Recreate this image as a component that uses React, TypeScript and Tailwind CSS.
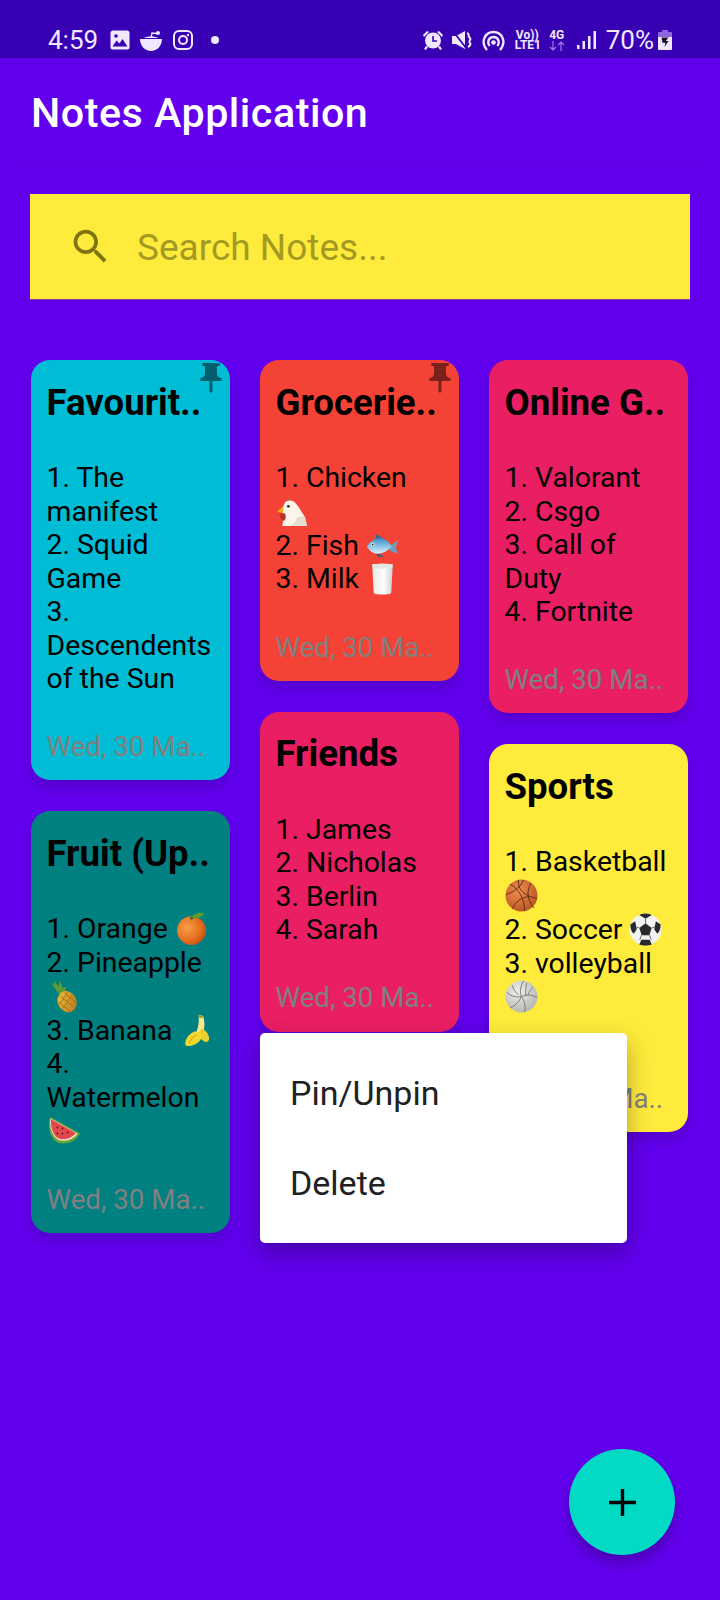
import React from 'react';

const Chicken = () => (
  <svg viewBox="0 0 32 32" className="inline-block w-[33px] h-[33px] align-[-7px]">
    <path d="M10 3l1 2 1-2 1 2 1.5-2 .5 3-5 .5z" fill="#c9603f" />
    <path d="M8 9c1-4 8-5 11-1 3 3 6 9 9 13l2 9H6c1-5 2-8 1-12-1-3-1-6 1-9z" fill="#fbf4ea" />
    <path d="M20 22c3-1 6-2 8-1l2 9H14c3-1 5-4 6-8z" fill="#e6dccd" />
    <path d="M7 11l-6 5 6 2z" fill="#f2a81d" />
    <path d="M3 18c1 3 2 7 4 7s3-3 2-7z" fill="#b5302a" />
    <circle cx="12" cy="11" r="1.4" fill="#333" />
  </svg>
);
const Fish = () => (
  <svg viewBox="0 0 32 32" className="inline-block w-[33px] h-[33px] align-[-7px]">
    <defs>
      <linearGradient id="fishg" x1="0" y1="0" x2="0" y2="1">
        <stop offset="0" stopColor="#3f8fc4" />
        <stop offset="0.55" stopColor="#8cc7e6" />
        <stop offset="1" stopColor="#dfeef5" />
      </linearGradient>
    </defs>
    <path d="M24 16l7-5-2 7 2 6-8-3z" fill="#6f9fc0" />
    <path d="M10 5c2 1 5 3 7 4l-8 2z" fill="#2d6f9f" />
    <path d="M1 17c3-6 11-10 17-7 3 1 5 4 7 7-3 4-9 7-14 7-4 0-8-3-10-7z" fill="url(#fishg)" />
    <circle cx="6.5" cy="15" r="1.8" fill="#fff" />
    <circle cx="6.5" cy="15" r="1" fill="#223" />
    <path d="M10 24l5 1 3 2-7 0z" fill="#33607f" />
  </svg>
);
const Milk = () => (
  <svg viewBox="0 0 32 32" className="inline-block w-[33px] h-[33px] align-[-7px]">
    <defs>
      <linearGradient id="milkg" x1="0" y1="0" x2="1" y2="0">
        <stop offset="0" stopColor="#e9e9e6" />
        <stop offset="0.55" stopColor="#ffffff" />
        <stop offset="1" stopColor="#c9d0d2" />
      </linearGradient>
    </defs>
    <path d="M6 2h20l-1.500 28c-1 2-16 2-17 0z" fill="url(#milkg)" />
    <ellipse cx="16" cy="4" rx="10" ry="2.6" fill="#e4e7e5" />
  </svg>
);
const Orange = () => (
  <svg viewBox="0 0 32 32" className="inline-block w-[33px] h-[33px] align-[-7px]">
    <defs>
      <radialGradient id="orangeg" cx="0.35" cy="0.4" r="0.75">
        <stop offset="0" stopColor="#f6a04a" />
        <stop offset="0.6" stopColor="#e56f1e" />
        <stop offset="1" stopColor="#b84b10" />
      </radialGradient>
    </defs>
    <circle cx="16" cy="18" r="14" fill="url(#orangeg)" />
    <path d="M16 5c2-3 7-5 12-4-1 4-7 6-12 5z" fill="#5d9a2f" />
    <circle cx="16" cy="6" r="1.4" fill="#3c6b1d" />
  </svg>
);
const Pineapple = () => (
  <svg viewBox="0 0 32 32" className="inline-block w-[33px] h-[33px] align-[-7px]">
    <defs>
      <linearGradient id="pineg" x1="0" y1="0" x2="1" y2="1">
        <stop offset="0" stopColor="#f3c63c" />
        <stop offset="1" stopColor="#b56f1a" />
      </linearGradient>
    </defs>
    <path d="M12 14L3 2l4 3 0-4 4 5 2-5 2 7 4-2-2 6 4 0z" fill="#5f9a35" />
    <ellipse cx="19.5" cy="21" rx="9" ry="10.5" transform="rotate(-28 19.5 21)" fill="url(#pineg)" />
    <path d="M13 16l13 10M11 21l11 9M17 12l11 10M25 14L14 29M20 12L11 25" stroke="#9b6a14" strokeWidth="0.8" fill="none" />
  </svg>
);
const Banana = () => (
  <svg viewBox="0 0 32 32" className="inline-block w-[33px] h-[33px] align-[-7px]">
    <path d="M19 1c3 0 5 1 5 3 1 5 1 10-1 14-2 3-5 4-8 3 3-5 5-12 4-20z" fill="#f7e58a" />
    <path d="M22 14c3 1 6 4 7 8 1 3-1 6-4 5-3-1-5-4-6-8z" fill="#e9cf2e" />
    <path d="M15 17c3 0 6 1 7 3 1 4-3 8-8 10-4 2-8 1-8-1 0-5 4-10 9-12z" fill="#f2d92d" />
    <path d="M17 20c-3 2-6 5-7 9" stroke="#c9ac18" strokeWidth="1" fill="none" />
    <path d="M19 1l4 1-.5 2-3.500-.5z" fill="#a9952a" />
  </svg>
);
const Watermelon = () => (
  <svg viewBox="0 0 32 32" className="inline-block w-[33px] h-[33px] align-[-7px]">
    <path d="M3 2L32 18C28 26 19 29 11 27 3 24 0 11 3 2z" fill="#6aa53a" />
    <path d="M3.500 3.500L29.500 18C25 24 18 26 12 24.500 5 22 2 11 3.500 3.500z" fill="#f6ecd6" />
    <path d="M4 4L28 17.500C24 23 17 24.500 12 23 6 21 3 11 4 4z" fill="#e2474f" />
    <circle cx="10" cy="12" r="0.9" fill="#5c1a1a" />
    <circle cx="15" cy="18" r="0.9" fill="#5c1a1a" />
    <circle cx="20" cy="17" r="0.9" fill="#5c1a1a" />
    <circle cx="10" cy="18" r="0.9" fill="#5c1a1a" />
    <circle cx="15" cy="13" r="0.9" fill="#5c1a1a" />
  </svg>
);
const Basketball = () => (
  <svg viewBox="0 0 32 32" className="inline-block w-[33px] h-[33px] align-[-7px]">
    <defs>
      <radialGradient id="bballg" cx="0.4" cy="0.35" r="0.75">
        <stop offset="0" stopColor="#ef8f50" />
        <stop offset="1" stopColor="#b4501d" />
      </radialGradient>
    </defs>
    <circle cx="16" cy="16" r="15.500" fill="url(#bballg)" />
    <path d="M5 5c8 4 14 14 14 26M13 1c-1 9 5 15 18 18M1 15c7-2 14-7 17-14M7 29c3-7 9-11 16-12M25 4c-4 8-4 15 3 24" stroke="#5b2a12" strokeWidth="0.9" fill="none" />
  </svg>
);
const Soccer = () => (
  <svg viewBox="0 0 32 32" className="inline-block w-[33px] h-[33px] align-[-7px]">
    <circle cx="16" cy="16" r="15.500" fill="#f2f2f2" />
    <path d="M16 10l6 4.500-2.300 7h-7.400L10 14.500z" fill="#2a2a2a" />
    <path d="M16 .5c3 0 5 .8 6 1.500l-6 3.500-6-3.500c1-.8 3-1.500 6-1.500zM1.500 11L6 8l1.500 8-3 4C2 18 1 14 1.500 11zM30.500 11L26 8l-1.500 8 3 4c2.500-2 3.500-6 3-9zM10 30.500l2-4.500h8l2 4.500c-3 1.300-9 1.300-12 0z" fill="#2a2a2a" />
    <path d="M16 10V5.500M22 14.500l3-1M20 21.500l1.500 4.500M12 21.500L10.500 26M10 14.500l-3-1" stroke="#555" strokeWidth="0.8" />
  </svg>
);
const Volleyball = () => (
  <svg viewBox="0 0 32 32" className="inline-block w-[33px] h-[33px] align-[-7px]">
    <defs>
      <radialGradient id="vballg" cx="0.4" cy="0.35" r="0.8">
        <stop offset="0" stopColor="#f0f0ec" />
        <stop offset="1" stopColor="#a9aba6" />
      </radialGradient>
    </defs>
    <circle cx="16" cy="16" r="15.500" fill="url(#vballg)" />
    <path d="M16 16c-2-5-1-10 2-15M16 16c-5 1-10 0-14-4M16 16c3 4 4 9 3 15M16 16c5-2 10-2 15 1M16 16c-2 5-6 9-11 11M21 3c-1 4-1 9-1 12M27 7c-2 2-4 5-5 8M7 5c1 4 3 7 6 9" stroke="#777" strokeWidth="0.9" fill="none" />
  </svg>
);

const PIN = 'M16,9V4l1,0c0.55,0,1-0.45,1-1v0c0-0.55-0.45-1-1-1H7C6.45,2,6,2.45,6,3v0c0,0.55,0.45,1,1,1l1,0v5c0,1.66-1.34,3-3,3h0v2h5.97v7l1,1l1-1v-7H19v-2h0C17.34,12,16,10.66,16,9z';

type Line = { t: string; e?: React.ComponentType };

const Card = ({
  title,
  lines,
  bg,
  pin,
}: {
  title: string;
  lines: Line[];
  bg: string;
  pin?: string;
}) => (
  <div className={`relative rounded-[19px] pl-[15.500px] pr-[14px] pt-[22.500px] pb-[16.500px] shadow-[0_8px_14px_rgba(0,0,0,0.14)] ${bg}`}>
    {pin && (
      <svg viewBox="0 0 24 24" className="absolute top-0 right-[1px] w-9 h-9" fill={pin}>
        <path d={PIN} />
      </svg>
    )}
    <div className="text-[36.600px] leading-[40px] font-bold text-black whitespace-nowrap">{title}</div>
    <div className="mt-[38.500px] text-[28.400px] leading-[33.500px] text-black">
      {lines.map((l, i) => {
        const E = l.e;
        if (l.t === '' && !E) return <div key={i} className="h-[33.500px]" />;
        return (
          <div key={i} className={E ? 'leading-[33.750px]' : ''}>
            {l.t}
            {E ? ' ' : ''}
            {E ? <E /> : null}
          </div>
        );
      })}
    </div>
    <div className="mt-[34.500px] text-[27.700px] leading-[33.750px] text-[#808080] whitespace-nowrap">Wed, 30 Ma..</div>
  </div>
);

const Ico = ({ w, h, children, vb }: { w: number; h: number; vb: string; children: React.ReactNode }) => (
  <svg viewBox={vb} width={w} height={h} className="shrink-0">
    {children}
  </svg>
);

const BAR = '#3700b3';
const FG = '#f1e8ff';

export default function App() {
  return (
    <div className="relative w-[720px] h-[1600px] overflow-hidden bg-[#6200ee] font-['Roboto',sans-serif]">
      {/* status bar */}
      <div className="h-[58px] bg-[#3700b3] flex items-center pl-[48px] pr-[48px] pt-[22px] text-[#f1e8ff] justify-between">
        <div className="flex items-center">
          <span className="text-[26px] leading-[30px] w-[62px]">4:59</span>
          <Ico w={20} h={20} vb="0 0 20 20">
            <rect x="0.5" y="0.5" width="19" height="19" rx="2.500" fill={FG} />
            <path d="M2.500 16.500l4-6 3 3 3-4.500 5 7.500z" fill={BAR} />
            <circle cx="6" cy="6" r="1.800" fill={BAR} />
          </Ico>
          <span className="w-[10px]" />
          <Ico w={22} h={21} vb="0 0 22 21">
            <path d="M0 9h22c0 7-5 12-11 12S0 16 0 9z" fill={FG} />
            <path d="M4 8c2-2 12-2 14 0z" fill={FG} />
            <path d="M11 8l1-5 5 .5" stroke={FG} strokeWidth="1.300" fill="none" />
            <circle cx="18" cy="3" r="2" fill={FG} />
          </Ico>
          <span className="w-[11px]" />
          <Ico w={20} h={20} vb="0 0 20 20">
            <rect x="1" y="1" width="18" height="18" rx="5" stroke={FG} strokeWidth="2" fill="none" />
            <circle cx="10" cy="10" r="4" stroke={FG} strokeWidth="2" fill="none" />
            <circle cx="15" cy="5" r="1.200" fill={FG} />
          </Ico>
          <span className="w-[18px]" />
          <span className="w-2 h-2 rounded-full bg-[#f1e8ff]" />
        </div>
        <div className="flex items-center">
          <Ico w={22} h={20} vb="0 0 22 20">
            <circle cx="11" cy="10.500" r="8" fill={FG} />
            <path d="M11 6v5h4" stroke={BAR} strokeWidth="1.600" fill="none" />
            <path d="M1 5l4-4 2 1-5 5zM21 5l-4-4-2 1 5 5zM4 16l-2 3 2 1 2-3zM18 16l2 3-2 1-2-3z" fill={FG} />
          </Ico>
          <span className="w-[8px]" />
          <Ico w={20} h={20} vb="0 0 20 20">
            <path d="M0 6h4l9-5v18l-9-5H0z" fill={FG} />
            <path d="M1 1l13 17" stroke={BAR} strokeWidth="1.800" />
            <path d="M15 3c3 1 1 3 2 4s2 1 1 3-1 2 0 3 0 3-2 4" stroke={FG} strokeWidth="2" fill="none" />
          </Ico>
          <span className="w-[9px]" />
          <Ico w={25} h={21} vb="0 0 25 21">
            <path d="M6 20C-1 12 4 2 12.500 2S26 12 19 20" stroke={FG} strokeWidth="2.300" fill="none" />
            <path d="M8.500 16c-3-5 0-9 4-9s7 4 4 9" stroke={FG} strokeWidth="2.300" fill="none" />
            <circle cx="12.500" cy="12.500" r="2.300" fill={FG} />
          </Ico>
          <span className="w-[9px]" />
          <div className="w-[25px] text-center font-bold text-[12px] leading-[10.500px]">
            <div>Vo))</div>
            <div>LTE1</div>
          </div>
          <span className="w-[8px]" />
          <div className="w-[18px] flex flex-col items-center">
            <div className="font-bold text-[12px] leading-[11px]">4G</div>
            <Ico w={18} h={10} vb="0 0 18 10">
              <path d="M5 0v9M2 6l3 3 3-3M13 10V1M10 4l3-3 3 3" stroke="#9d7ce0" strokeWidth="1.200" fill="none" />
            </Ico>
          </div>
          <span className="w-[11px]" />
          <Ico w={20} h={20} vb="0 0 20 20">
            <rect x="0" y="15" width="2.500" height="4" fill={FG} />
            <rect x="5.500" y="11" width="2.500" height="8" fill={FG} />
            <rect x="11" y="6" width="2.500" height="13" fill={FG} />
            <rect x="16.500" y="1" width="2.500" height="18" fill={FG} />
          </Ico>
          <span className="w-[9px]" />
          <span className="text-[26px] leading-[30px]">70%</span>
          <span className="w-[4px]" />
          <Ico w={14} h={20} vb="0 0 14 20">
            <path d="M4 0h6v2h3a1 1 0 0 1 1 1v5H0V3a1 1 0 0 1 1-1h3z" fill="#8d68dc" />
            <path d="M0 7h14v12a1 1 0 0 1-1 1H1a1 1 0 0 1-1-1z" fill={FG} />
            <path d="M3.500 7.500h7L7.800 11h2.700l-4 6 .8-4.200H4.500z" fill="#1c1030" />
          </Ico>
        </div>
      </div>

      {/* app bar */}
      <div className="h-[105px] flex items-center pl-[31px] pt-[4px] shadow-[0_2px_6px_rgba(0,0,0,0.05)]">
        <span className="text-[41.250px] tracking-[0.5px] leading-[48px] font-medium text-white">Notes Application</span>
      </div>

      {/* search */}
      <div className="mx-[30px] mt-[31px] h-[106px] bg-[#ffeb3b] border-b border-[#8a3ca8] flex items-center pl-[38px]">
        <svg viewBox="0 0 24 24" className="w-[45px] h-[45px] shrink-0" fill="#7f7410">
          <path d="M15.500 14h-.79l-.28-.27C15.410 12.590 16 11.110 16 9.500 16 5.910 13.090 3 9.500 3S3 5.910 3 9.500 5.910 16 9.500 16c1.610 0 3.090-.59 4.230-1.570l.27.28v.79l5 4.990L20.490 19l-4.990-5zm-6 0C7.010 14 5 11.990 5 9.500S7.010 5 9.500 5 14 7.010 14 9.500 11.990 14 9.500 14z" />
        </svg>
        <span className="ml-[24px] mt-[2px] text-[37px] leading-[44px] text-[#a39a24]">Search Notes...</span>
      </div>

      {/* columns */}
      <div className="mt-[60px] pl-[31px] flex gap-[30px] items-start">
        <div className="w-[199px] flex flex-col gap-[31px]">
          <Card
            title="Favourit.."
            bg="bg-[#00bcd4]"
            pin="#005f6e"
            lines={[{ t: '1. The manifest' }, { t: '2. Squid Game' }, { t: '3. Descendents of the Sun' }]}
          />
          <Card
            title="Fruit (Up.."
            bg="bg-[#008080]"
            lines={[
              { t: '1. Orange', e: Orange },
              { t: '2. Pineapple', e: Pineapple },
              { t: '3. Banana', e: Banana },
              { t: '4. Watermelon', e: Watermelon },
            ]}
          />
        </div>
        <div className="w-[199px] flex flex-col gap-[31px]">
          <Card
            title="Grocerie.."
            bg="bg-[#f44336]"
            pin="#7a211b"
            lines={[
              { t: '1. Chicken', e: Chicken },
              { t: '2. Fish', e: Fish },
              { t: '3. Milk', e: Milk },
            ]}
          />
          <Card
            title="Friends"
            bg="bg-[#e91e63]"
            lines={[{ t: '1. James' }, { t: '2. Nicholas' }, { t: '3. Berlin' }, { t: '4. Sarah' }]}
          />
        </div>
        <div className="w-[199px] flex flex-col gap-[31px]">
          <Card
            title="Online G.."
            bg="bg-[#e91e63]"
            lines={[{ t: '1. Valorant' }, { t: '2. Csgo' }, { t: '3. Call of Duty' }, { t: '4. Fortnite' }]}
          />
          <Card
            title="Sports"
            bg="bg-[#ffeb3b]"
            lines={[
              { t: '1. Basketball', e: Basketball },
              { t: '2. Soccer', e: Soccer },
              { t: '3. volleyball', e: Volleyball },
              { t: '' },
            ]}
          />
        </div>
      </div>

      {/* popup menu */}
      <div className="absolute left-[260px] top-[1033px] w-[367px] bg-white rounded-[5px] py-[15px] text-[34px] text-[#212121] shadow-[0_10px_24px_rgba(0,0,0,0.3)]">
        <div className="h-[90px] flex items-center pl-[30px]">Pin/Unpin</div>
        <div className="h-[90px] flex items-center pl-[30px]">Delete</div>
      </div>

      {/* fab */}
      <div className="absolute left-[569px] top-[1449px] w-[106px] h-[106px] rounded-full bg-[#03dac5] flex items-center justify-center shadow-[0_8px_14px_rgba(0,0,0,0.25)]">
        <svg viewBox="0 0 27 27" className="w-[27px] h-[27px]">
          <path d="M11.800 0h3.400v11.800H27v3.400H15.200V27h-3.400V15.200H0v-3.400h11.800z" fill="#000" />
        </svg>
      </div>
    </div>
  );
}
